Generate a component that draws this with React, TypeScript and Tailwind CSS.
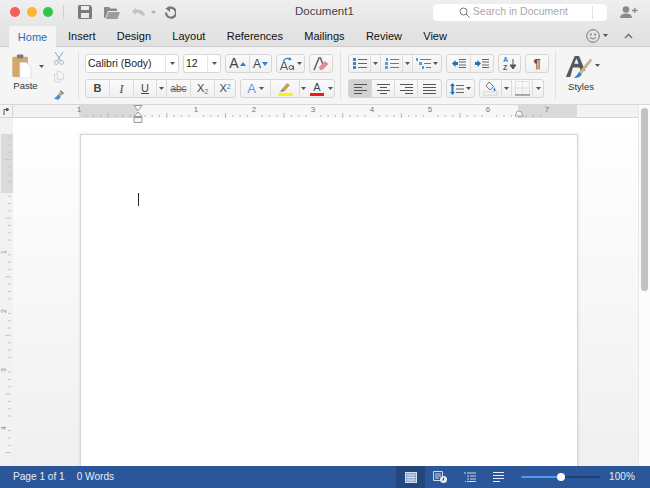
import type { ReactNode } from "react";

const tabs = ["Insert", "Design", "Layout", "References", "Mailings", "Review", "View"];

function Caret({ className = "" }: { className?: string }) {
  return (
    <svg width="5" height="3" viewBox="0 0 5 3" className={className}>
      <path d="M0 0h5L2.500 3z" fill="#555" />
    </svg>
  );
}

function Group({ children, className = "" }: { children: ReactNode; className?: string }) {
  return (
    <div className={`flex h-[19px] rounded-[3px] border border-[#d6d6d6] bg-gradient-to-b from-[#fafafa] to-[#f0f0f0] divide-x divide-[#dcdcdc] ${className}`}>
      {children}
    </div>
  );
}

function Btn({ w, children, active }: { w: number; children: ReactNode; active?: boolean }) {
  return (
    <div
      className={`flex items-center justify-center ${active ? "bg-[#d2d2d2]" : ""}`}
      style={{ width: w }}
    >
      {children}
    </div>
  );
}

function Lines({ d, color = "#555", w = 13 }: { d: string; color?: string; w?: number }) {
  return (
    <svg width={w} height="11" viewBox={`0 0 ${w} 11`}>
      <path d={d} stroke={color} strokeWidth="1" fill="none" />
    </svg>
  );
}

function Select({ w, label }: { w: number; label: string }) {
  return (
    <div
      className="flex h-[19px] items-center rounded-[3px] border border-[#d6d6d6] bg-white text-[10.500px] text-[#222]"
      style={{ width: w }}
    >
      <span className="flex-1 pl-[2px]">{label}</span>
      <span className="flex h-full w-[13px] items-center justify-center border-l border-[#e6e6e6]">
        <Caret />
      </span>
    </div>
  );
}

function BigA({ up }: { up: boolean }) {
  return (
    <span className="flex items-center gap-[1px]">
      <span className={`${up ? "text-[14px]" : "text-[12px]"} text-[#444]`}>A</span>
      <svg width="6" height="4" viewBox="0 0 6 4">
        <path d={up ? "M0 4h6L3 0z" : "M0 0h6L3 4z"} fill="#2f7fd0" />
      </svg>
    </span>
  );
}

function Ruler() {
  const ticks = [];
  for (let i = -7; i < 57; i++) {
    const x = 124 + i * 7.33;
    if (i % 8 === 0) continue;
    const h = i % 4 === 0 ? 5 : 1.5;
    ticks.push(<rect key={i} x={x} y={i % 4 === 0 ? 8 : 10} width="1" height={h} fill={i % 4 === 0 ? "#b5b5b5" : "#a8a8a8"} />);
  }
  const nums = [
    [66, "1"],
    [183, "1"],
    [241, "2"],
    [300, "3"],
    [359, "4"],
    [417, "5"],
    [475, "6"],
    [534, "7"],
  ] as const;
  return (
    <svg width="625" height="13" viewBox="0 0 625 13" className="block">
      <rect x="66" y="0" width="58" height="13" fill="#dadada" />
      <rect x="124" y="0" width="381" height="13" fill="#f7f7f7" />
      <rect x="505" y="0" width="59" height="13" fill="#dadada" />
      {ticks}
      {nums.map(([x, n], i) => (
        <text key={i} x={x} y="7" fontSize="8" fill="#777" textAnchor="middle" fontFamily="Liberation Sans">
          {n}
        </text>
      ))}
      <path d="M505 9a3 3 0 0 1 6 0l1 2h-8z" fill="#f4f4f4" stroke="#888" strokeWidth="0.7" transform="translate(-2 0)" />
    </svg>
  );
}

function VRuler() {
  const ticks = [];
  for (let i = 0; i < 44; i++) {
    const y = 19 + i * 7.33;
    if (i % 8 === 7) continue;
    const major = i % 4 === 3;
    ticks.push(<rect key={i} x={major ? 5 : 8} y={y} width={major ? 6 : 3} height="1" fill="#c8c8c8" />);
  }
  return (
    <svg width="13" height="348" viewBox="0 0 13 348" className="block shrink-0">
      <rect width="13" height="348" fill="#f2f2f2" />
      <rect x="1" y="16" width="12" height="59" fill="#dadada" />
      {ticks}
      {[134, 193, 252, 310].map((y, i) => (
        <text key={y} x="3" y={y} fontSize="7" fill="#888" fontFamily="Liberation Sans" transform={`rotate(-90 3 ${y})`} dx="-2" dy="3">
          {i + 1}
        </text>
      ))}
    </svg>
  );
}

export default function App() {
  return (
    <div className="flex h-[488px] w-[650px] flex-col overflow-hidden bg-white font-['Liberation_Sans',sans-serif]">
      {/* title bar */}
      <div className="flex h-[24px] shrink-0 items-center bg-gradient-to-b from-[#efefef] to-[#e6e6e6]">
        <div className="ml-[10px] flex gap-[6.500px]">
          <span className="h-[10px] w-[10px] rounded-full bg-[#f85d56]" />
          <span className="h-[10px] w-[10px] rounded-full bg-[#fbb62e]" />
          <span className="h-[10px] w-[10px] rounded-full bg-[#2fc748]" />
        </div>
        <span className="ml-[10px] h-[14px] w-px bg-[#d0d0d0]" />
        <svg width="14" height="14" viewBox="0 0 14 14" className="ml-[14px]">
          <path d="M0 1.500A1.500 1.500 0 0 1 1.500 0H12l2 2v10.500a1.500 1.500 0 0 1-1.500 1.500h-11A1.500 1.500 0 0 1 0 12.500zM3 1v4h8V1zM3 8v5h8V8z" fill="#7b7b7b" fillRule="evenodd" />
        </svg>
        <svg width="16" height="13" viewBox="0 0 16 13" className="ml-[12px]">
          <path d="M0 2q0-1 1-1h4l1.500 1.500H12q1 0 1 1V5H4L1.500 12H1q-1 0-1-1z" fill="#8a8a8a" />
          <path d="M4.500 6H16l-2.500 7H2z" fill="#9d9d9d" />
        </svg>
        <svg width="15" height="11" viewBox="0 0 15 11" className="ml-[11px]">
          <path d="M5 1 1 4.500 5 8V6q5-.5 6.500 3.500 1.500-7-6.500-6z" fill="#c4c4c4" />
          <path d="M5 3.500q7-.5 8 5" fill="none" stroke="#c4c4c4" strokeWidth="2" />
        </svg>
        <Caret className="ml-[5px] opacity-40" />
        <svg width="12" height="13" viewBox="0 0 12 13" className="ml-[8px]">
          <path d="M4 2.700A5 5 0 1 1 2 6.500" fill="none" stroke="#777" strokeWidth="2.200" />
          <path d="M6 0v6L1.500 2.500z" fill="#777" />
        </svg>
        <span className="ml-[119px] text-[11.500px] text-[#444]">Document1</span>
        <div className="ml-[79px] flex h-[17px] w-[174px] items-center rounded-[4px] bg-white">
          <svg width="11" height="11" viewBox="0 0 11 11" className="ml-[26px]">
            <circle cx="4.500" cy="4.500" r="3.500" fill="none" stroke="#777" />
            <path d="m7 7 3.500 3.500" stroke="#777" />
          </svg>
          <span className="ml-[3px] text-[10.500px] text-[#a9a9a9]">Search in Document</span>
          <span className="ml-[24px] h-[13px] w-px bg-[#e2e2e2]" />
        </div>
        <svg width="18" height="12" viewBox="0 0 18 12" className="ml-[13px]">
          <circle cx="6" cy="3.500" r="3.300" fill="#8a8a8a" />
          <path d="M0 12q0-4.500 6-4.500t6 4.500z" fill="#8a8a8a" />
          <path d="M12 4.500h5.500M14.750 2v5" stroke="#8a8a8a" strokeWidth="1.300" />
        </svg>
      </div>

      {/* tabs */}
      <div className="flex h-[23px] shrink-0 items-end border-b border-[#cdcdcd] bg-gradient-to-b from-[#e6e6e6] to-[#e0e0e0] pl-[9px] text-[11px] text-[#111]">
        <div className="relative top-px flex h-[21px] w-[47px] items-center justify-center rounded-t-[3px] bg-[#f5f5f5] pt-[2px] text-[#2b6cb5]">
          Home
        </div>
        <div className="flex h-[21px] w-[450px] items-center gap-[21.300px] pl-[12px] pt-[2px]">
          {tabs.map((t) => (
            <span key={t}>{t}</span>
          ))}
        </div>
        <div className="ml-[80px] flex h-[21px] items-center">
          <svg width="14" height="14" viewBox="0 0 14 14">
            <circle cx="7" cy="7" r="6.300" fill="none" stroke="#777" />
            <circle cx="4.800" cy="5.500" r="0.900" fill="#777" />
            <circle cx="9.200" cy="5.500" r="0.900" fill="#777" />
            <path d="M4 8.500q3 3 6 0" fill="none" stroke="#777" />
          </svg>
          <Caret className="ml-[3px]" />
          <svg width="9" height="6" viewBox="0 0 9 6" className="ml-[16px]">
            <path d="M1 5 4.500 1.500 8 5" fill="none" stroke="#777" strokeWidth="1.600" />
          </svg>
        </div>
      </div>

      {/* ribbon */}
      <div className="flex h-[58px] shrink-0 border-b border-[#d8d8d8] bg-[#f5f5f5]">
        <div className="my-[4px] flex w-[79px] shrink-0 border-r border-[#e2e2e2]">
          <div className="ml-[12px] flex w-[32px] flex-col">
            <div className="mt-[3px] flex items-center">
              <svg width="20" height="24" viewBox="0 0 21 26">
                <rect x="0" y="3" width="17" height="22" rx="1.500" fill="#d3a76e" />
                <rect x="5" y="0.500" width="7" height="4" rx="1" fill="#7a7a7a" />
                <path d="M8 9h7l5 5v12H8z" fill="#fff" stroke="#bdbdbd" strokeWidth="0.500" />
              </svg>
              <Caret className="ml-[7px]" />
            </div>
            <span className="mt-[1px] w-[27px] text-center text-[9.500px] text-[#333]">Paste</span>
          </div>
          <div className="ml-[9px] flex flex-col gap-[6px] pt-[1px]">
            <svg width="12" height="15" viewBox="0 0 12 15">
              <path d="M1.500 0 8 10M10.500 0 4 10" stroke="#9ab0c4" strokeWidth="1.200" />
              <circle cx="3" cy="12" r="2.200" fill="none" stroke="#9ab0c4" />
              <circle cx="9" cy="12" r="2.200" fill="none" stroke="#9ab0c4" />
            </svg>
            <svg width="12" height="13" viewBox="0 0 12 13">
              <path d="M4 .5h4l3 3v6H4zM4 3.500H1V12.500h7v-3" fill="none" stroke="#d4d4d4" />
            </svg>
            <svg width="13" height="13" viewBox="0 0 13 13">
              <path d="M8 1l4 4-2 1-3-3z" fill="#7a8796" />
              <path d="M7 3l3 3-2 2.500L5 6z" fill="#c7a36a" />
              <path d="M5 6l3 3-3 3.500-5-2q3-1 5-4.500z" fill="#4a8fd6" />
            </svg>
          </div>
        </div>

        <div className="ml-[6px] flex w-[255px] shrink-0 flex-col gap-[6px] pt-[7px]">
          <div className="flex gap-[4px]">
            <Select w={94} label="Calibri (Body)" />
            <Select w={38} label="12" />
            <Group>
              <Btn w={24}><BigA up /></Btn>
              <Btn w={21}><BigA up={false} /></Btn>
            </Group>
            <Group>
              <Btn w={27}>
                <span className="flex items-center gap-[2px]">
                  <svg width="15" height="14" viewBox="0 0 15 14">
                    <path d="M3 4q3-4 7-2" fill="none" stroke="#2f7fd0" strokeWidth="1.200" />
                    <path d="M9 0l3 2.500-3.500 1z" fill="#2f7fd0" />
                    <path d="M.5 13 3.500 5h1l3 8M2 10.500h4" fill="none" stroke="#555" strokeWidth="1.100" />
                    <circle cx="11" cy="10.500" r="2" fill="none" stroke="#555" />
                    <path d="M13.500 8.500V13" stroke="#555" />
                  </svg>
                  <Caret />
                </span>
              </Btn>
            </Group>
            <Group>
              <Btn w={22}>
                <svg width="16" height="14" viewBox="0 0 16 14">
                  <path d="M1 13 6 1h1.500l3 8" fill="none" stroke="#666" strokeWidth="1.600" />
                  <path d="M6 10l6-6 3.500 3-6 6H7z" fill="#e58c9b" />
                </svg>
              </Btn>
            </Group>
          </div>
          <div className="flex gap-[4px]">
            <Group>
              <Btn w={24}><span className="text-[11px] font-bold text-[#444]">B</span></Btn>
              <Btn w={24}><span className="font-['Liberation_Serif',serif] text-[12px] italic text-[#444]">I</span></Btn>
              <Btn w={23}><span className="text-[11px] text-[#444] underline">U</span></Btn>
              <Btn w={10}><Caret /></Btn>
              <Btn w={24}><span className="text-[10px] text-[#666] line-through">abc</span></Btn>
              <Btn w={24}>
                <span className="text-[11px] text-[#444]">X<sub className="text-[7px] text-[#2f7fd0]">2</sub></span>
              </Btn>
              <Btn w={20}>
                <span className="text-[11px] text-[#444]">X<sup className="text-[7px] text-[#2f7fd0]">2</sup></span>
              </Btn>
            </Group>
            <Group>
              <Btn w={30}>
                <span className="flex items-center gap-[3px]">
                  <span className="text-[13px] text-[#5a9bdc]">A</span>
                  <Caret />
                </span>
              </Btn>
              <Btn w={29}>
                <svg width="15" height="15" viewBox="0 0 15 15">
                  <path d="M4 8l5-6 3 2-5 6z" fill="#c4a25a" />
                  <path d="M2 11l2-3 3 2z" fill="#777" />
                  <rect x="0.500" y="12" width="14" height="3" fill="#fdf000" />
                </svg>
              </Btn>
              <Btn w={34}>
                <span className="flex items-center gap-[4px]">
                  <Caret />
                  <span className="flex flex-col items-center leading-[11px]">
                    <span className="text-[11px] text-[#444]">A</span>
                    <span className="h-[3px] w-[14px] bg-[#ee1c0e]" />
                  </span>
                  <Caret />
                </span>
              </Btn>
            </Group>
          </div>
        </div>

        <span className="my-[4px] w-px bg-[#e2e2e2]" />

        <div className="ml-[7px] flex w-[207px] shrink-0 flex-col gap-[6px] pt-[7px]">
          <div className="flex gap-[4px]">
            <Group>
              <Btn w={22}>
                <svg width="14" height="11" viewBox="0 0 14 11">
                  <path d="M5 1.500h9M5 5.500h9M5 9.500h9" stroke="#666" />
                  <path d="M0 0h3v3H0zM0 4h3v3H0zM0 8h3v3H0z" fill="#2f86d8" />
                </svg>
              </Btn>
              <Btn w={10}><Caret /></Btn>
              <Btn w={22}>
                <svg width="14" height="11" viewBox="0 0 14 11">
                  <path d="M5 1.500h9M5 5.500h9M5 9.500h9" stroke="#777" />
                  <path d="M1 0h2v3H1zM0 4h3v3H0zM0 8h3v3H0z" fill="#5a9bdc" />
                </svg>
              </Btn>
              <Btn w={10}><Caret /></Btn>
              <Btn w={28}>
                <span className="flex items-center gap-[2px]">
                  <svg width="15" height="11" viewBox="0 0 15 11">
                    <path d="M4 1.500h11M8 5.500h7M10 9.500h5" stroke="#777" />
                    <path d="M0 0h2v3H0zM3 4h3v3H3zM6 8h2v3H6z" fill="#5a9bdc" />
                  </svg>
                  <Caret />
                </span>
              </Btn>
            </Group>
            <Group>
              <Btn w={24}>
                <svg width="14" height="11" viewBox="0 0 14 11">
                  <path d="M7 1.500h7M7 4h7M7 7h7M7 9.500h7" stroke="#666" />
                  <path d="M0 5.500 3.500 2v2H6v3H3.500v2z" fill="#1f6fc7" />
                </svg>
              </Btn>
              <Btn w={22}>
                <svg width="14" height="11" viewBox="0 0 14 11">
                  <path d="M7 1.500h7M7 4h7M7 7h7M7 9.500h7" stroke="#666" />
                  <path d="M6 5.500 2.500 2v2H0v3h2.500v2z" fill="#1f6fc7" />
                </svg>
              </Btn>
            </Group>
            <Group>
              <Btn w={21}>
                <span className="flex items-center gap-[2px]">
                  <span className="flex flex-col text-[7px] font-bold leading-[8px]">
                    <span className="text-[#2f7fd0]">A</span>
                    <span className="text-[#555]">Z</span>
                  </span>
                  <svg width="6" height="10" viewBox="0 0 6 10">
                    <path d="M3 0v6M0 6h6L3 10z" stroke="#555" fill="#555" />
                  </svg>
                </span>
              </Btn>
            </Group>
            <Group>
              <Btn w={22}><span className="text-[13px] font-bold text-[#555]">¶</span></Btn>
            </Group>
          </div>
          <div className="flex gap-[4px]">
            <Group>
              <Btn w={23} active><Lines d="M0 1.500h13M0 4.500h8M0 7.500h13M0 10.500h8" /></Btn>
              <Btn w={23}><Lines d="M0 1.500h13M3 4.500h7M0 7.500h13M3 10.500h7" /></Btn>
              <Btn w={23}><Lines d="M0 1.500h13M5 4.500h8M0 7.500h13M5 10.500h8" /></Btn>
              <Btn w={23}><Lines d="M0 1.500h13M0 4.500h13M0 7.500h13M0 10.500h13" /></Btn>
            </Group>
            <Group>
              <Btn w={27}>
                <span className="flex items-center gap-[2px]">
                  <svg width="14" height="12" viewBox="0 0 14 12">
                    <path d="M6 2.500h8M6 6h8M6 9.500h8" stroke="#666" />
                    <path d="M2.500 0 5 3H0zM2.500 12 0 9h5zM1.500 3h2v6h-2z" fill="#1f6fc7" />
                  </svg>
                  <Caret />
                </span>
              </Btn>
            </Group>
            <Group>
              <Btn w={22}>
                <svg width="15" height="15" viewBox="0 0 15 15">
                  <path d="M6 1l4.500 4.500L7 9 3 5z" fill="none" stroke="#777" />
                  <path d="M11 6q2 2.500 1.500 3.500t-2 0z" fill="#2f86d8" />
                  <rect x="0" y="11" width="14" height="3" fill="#f7f7f7" stroke="#bbb" strokeWidth="0.600" />
                </svg>
              </Btn>
              <Btn w={10}><Caret /></Btn>
              <Btn w={21}>
                <svg width="15" height="15" viewBox="0 0 15 15">
                  <path d="M.5.500h14v13H.5zM7.500.500v13M.5 7h14" fill="none" stroke="#ccc" strokeDasharray="1 1" />
                  <path d="M0 14h15" stroke="#666" />
                </svg>
              </Btn>
              <Btn w={10}><Caret /></Btn>
            </Group>
          </div>
        </div>

        <span className="my-[4px] w-px bg-[#e2e2e2]" />

        <div className="ml-[9px] flex flex-col pt-[7px]">
          <div className="flex items-center">
            <svg width="29" height="25" viewBox="0 0 33 28">
              <path d="M1 26 11 2h5l7 17h-5l-1.500-4H9l-3 11zM10.500 11h5L13 5z" fill="#55595f" fillRule="evenodd" />
              <path d="M29 5 16 20l3 2.500L31 7z" fill="#c9b28c" />
              <path d="M16 20l3 3q-2 4-9 4 4-2 6-7z" fill="#2f7fd0" />
            </svg>
            <Caret className="-mt-[2px] ml-[1px]" />
          </div>
          <span className="mt-[1px] w-[32px] text-center text-[9.500px] text-[#333]">Styles</span>
        </div>
      </div>

      {/* ruler, document and scroll bar */}
      <div className="flex min-h-0 flex-1">
        <div className="flex w-[638px] shrink-0 flex-col">
          <div className="relative flex h-[13px] shrink-0 border-b border-[#d4d4d4] bg-[#f2f2f2]">
            <div className="flex w-[13px] items-center justify-center border-r border-[#d4d4d4]">
              <svg width="6" height="7" viewBox="0 0 6 7">
                <path d="M1 7V1.500h4M3.500 0 6 1.500 3.500 3z" stroke="#555" fill="none" />
              </svg>
            </div>
            <Ruler />
            <svg width="10" height="18" viewBox="0 0 10 18" className="absolute left-[133px] top-0 z-10">
              <path d="M1 .5h8L5 6zM5 7l4 4.500H1zM1 12.500h8v5H1z" fill="#f5f5f5" stroke="#999" />
            </svg>
          </div>
          <div className="flex min-h-0 flex-1 overflow-hidden">
            <VRuler />
            <div className="flex min-w-0 flex-1 bg-gradient-to-b from-white to-[#f0f0f0] pl-[67px] pt-[16px]">
              <div className="h-[400px] w-[498px] shrink-0 border border-[#d6d6d6] bg-white pl-[57px] pt-[58px] shadow-[0_0_3px_rgba(0,0,0,0.12)]">
                <div className="h-[13px] w-px bg-[#222]" />
              </div>
            </div>
          </div>
        </div>
        <div className="flex-1 border-l border-[#e8e8e8] bg-[#fbfbfb] pl-[2px] pt-[3px]">
          <div className="h-[183px] w-[7px] rounded-full bg-[#c2c2c2]" />
        </div>
      </div>

      {/* status bar */}
      <div className="flex h-[22px] shrink-0 items-center bg-[#2b579a] text-[10.100px] text-[#e6ecf5]">
        <span className="ml-[13px]">Page 1 of 1</span>
        <span className="ml-[12px]">0 Words</span>
        <div className="ml-[282px] flex h-full w-[29px] items-center justify-center bg-[#214680]">
          <svg width="12" height="11" viewBox="0 0 12 11">
            <rect x="0.500" y="0.500" width="11" height="10" fill="#8ea6c9" stroke="#d5deeb" />
            <path d="M2 3h8M2 5.500h8M2 8h8" stroke="#e6ecf5" />
          </svg>
        </div>
        <svg width="14" height="12" viewBox="0 0 14 12" className="ml-[8px]">
          <path d="M.5.500h9v9h-9zM2 3h6M2 5h6M2 7h4" fill="none" stroke="#cfdbeb" />
          <circle cx="10.500" cy="8.500" r="3.500" fill="#e6ecf5" />
          <path d="M10.500 6.500v2.500h-1.500" stroke="#2b579a" fill="none" />
        </svg>
        <svg width="12" height="10" viewBox="0 0 12 10" className="ml-[17px]">
          <path d="M0 1h2M3 1h9M3 4h2M6 4h6M3 7h2M6 7h6M1 9.500h1M3 9.500h9" stroke="#cfdbeb" />
        </svg>
        <svg width="11" height="10" viewBox="0 0 11 10" className="ml-[17px]">
          <path d="M0 .5h11M0 3.500h11M0 6.500h11M0 9.500h7" stroke="#e6ecf5" />
        </svg>
        <div className="relative ml-[17px] flex h-[2px] w-[79px] bg-[#1d3f73]">
          <div className="h-full w-[40px] rounded-full bg-[#4f9bf0]" />
          <div className="absolute left-[36px] -top-[3px] h-[8px] w-[8px] rounded-full bg-white" />
        </div>
        <span className="ml-[9px]">100%</span>
      </div>
    </div>
  );
}
